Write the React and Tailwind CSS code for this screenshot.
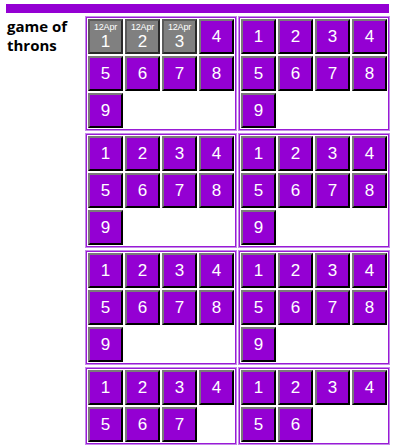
import React from 'react';

const panels = [9, 9, 9, 9, 9, 9, 7, 6];

function Cell({ n, booked }) {
  if (booked) {
    return (
      <div className="m-px flex h-[35px] w-[35px] flex-col items-center border-2 border-t-[#5a5a5a] border-l-[#5a5a5a] border-r-[#2a2a2a] border-b-[#2a2a2a] bg-[#808080] pt-px text-white">
        <span className="text-[9px] leading-[10px] tracking-tight">12Apr</span>
        <span className="text-[17px] leading-[19px]">{n}</span>
      </div>
    );
  }
  return (
    <div className="m-px flex h-[35px] w-[35px] items-center justify-center border-2 border-t-[#7a7a7a] border-l-[#7a7a7a] border-r-black border-b-black bg-[#9400d3] text-[17px] leading-none text-white">
      {n}
    </div>
  );
}

export default function App() {
  return (
    <div className="pt-1 font-['Liberation_Sans',Arial,sans-serif]">
      <div className="ml-[6px] h-[9px] w-[383px] bg-[#9400d3]" />
      <div className="mt-[3px] flex">
        <div className="w-[85px] pl-[7px] pt-px font-['Open_Sans',sans-serif] text-[15px] font-bold leading-[19px] text-black">
          <div>game of</div>
          <div>throns</div>
        </div>
        <div className="grid grid-cols-[152px_152px] gap-x-px gap-y-[2px]">
          {panels.map((count, p) => (
            <div key={p} className="border border-[#c48be8]">
              <div className="border border-[#9a1ad6]">
                <div className="flex flex-wrap">
                  {Array.from({ length: count }, (_, i) => (
                    <Cell key={i} n={i + 1} booked={p === 0 && i < 3} />
                  ))}
                </div>
              </div>
            </div>
          ))}
        </div>
      </div>
    </div>
  );
}
